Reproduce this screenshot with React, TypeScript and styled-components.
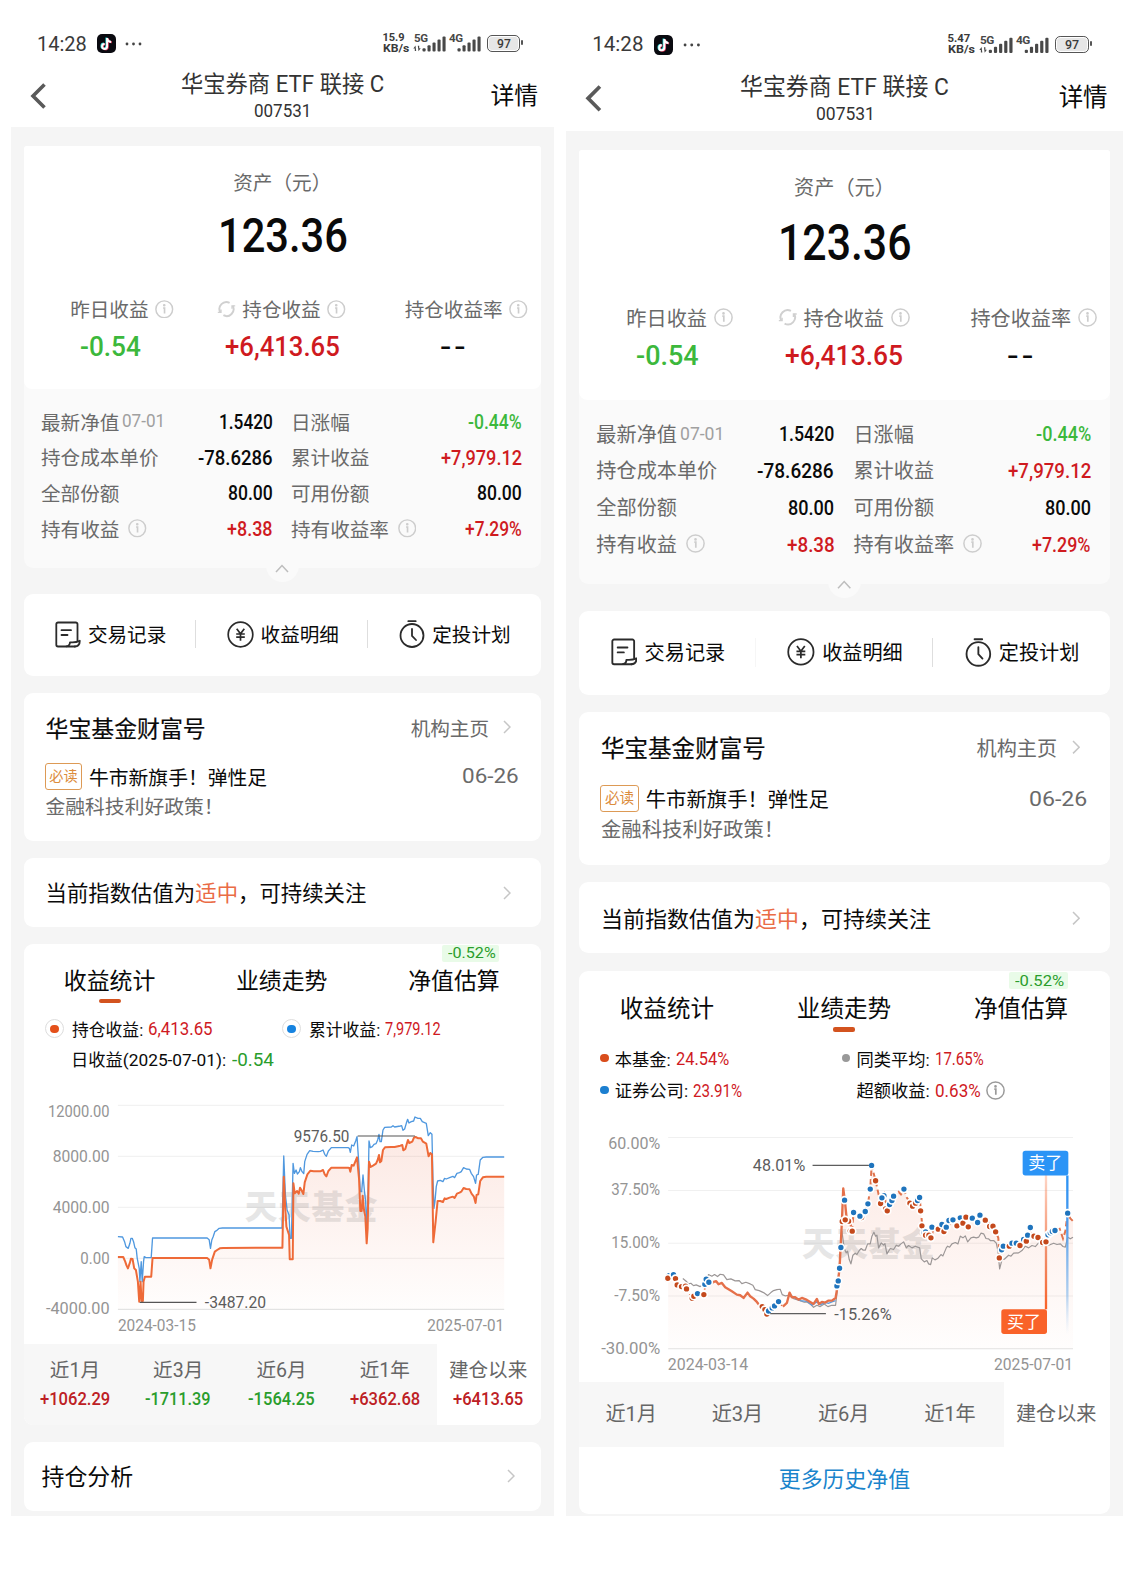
import React, { useLayoutEffect, useRef, useState } from 'react';
import styled, { createGlobalStyle } from 'styled-components';

const GlobalStyle = createGlobalStyle`
  * { box-sizing: border-box; }
  body {
    margin: 0;
    background: #fff;
    font-family: Roboto, 'Noto Sans CJK SC', sans-serif;
    color: #0a0a0a;
  }
`;

const RED = '#cf1a1f';
const GREEN = '#3cb83c';
const DEEP_GREEN = '#2a9d2c';

/* ---------- fitted text ---------- */

const FitBox = styled.span<{ $w: number; $size: number; $weight?: number; $color?: string; $gap?: number }>`
  display: block;
  flex: none;
  width: ${p => p.$w}px;
  font-size: ${p => p.$size}px;
  line-height: 1.2;
  font-weight: ${p => p.$weight ?? 400};
  letter-spacing: ${p => p.$gap ?? 0}px;
  color: ${p => p.$color ?? 'inherit'};
  white-space: nowrap;
`;

const FitInner = styled.span`
  display: inline-block;
  transform-origin: 0 50%;
`;

type FitProps = { w: number; size: number; weight?: number; color?: string; gap?: number; children: string };

function Fit({ w, size, weight, color, gap, children }: FitProps) {
  const ref = useRef<HTMLSpanElement>(null);
  const [k, setK] = useState(1);
  useLayoutEffect(() => {
    if (ref.current) setK(w / ref.current.offsetWidth);
  }, [w, size, weight, children]);
  return (
    <FitBox $w={w} $size={size} $weight={weight} $color={color} $gap={gap}>
      <FitInner ref={ref} style={{ transform: `scaleX(${k})` }}>{children}</FitInner>
    </FitBox>
  );
}

/* ---------- page frame ---------- */

const Page = styled.main`
  display: flex;
  align-items: flex-start;
  gap: 12px;
  width: 1134px;
  height: 1593px;
  padding-left: 11px;
  overflow: hidden;
  background: #fff;
`;

const Phone = styled.section<{ $zoom: number }>`
  flex: none;
  width: 542.5px;
  zoom: ${p => p.$zoom};
`;

const StatusBar = styled.div`
  display: flex;
  align-items: center;
  height: 56px;
  padding: 31px 33.5px 0 26px;
  color: #3a3a3a;
`;

const AppTile = styled.span`
  display: grid;
  place-items: center;
  width: 19px;
  height: 19px;
  margin: 0 9px 0 10px;
  border-radius: 5px;
  background: #0a0a10;
`;

const Speed = styled.div`
  display: grid;
  margin-left: auto;
  margin-right: 4px;
  > span { line-height: 10.6px; height: 10.6px; }
`;

const Battery = styled.div`
  position: relative;
  display: grid;
  place-items: center;
  width: 33px;
  height: 17px;
  margin-left: 6px;
  border: 1.7px solid #555;
  border-radius: 5px;
  background: #e6e6e6;
  box-shadow: inset 0 0 0 1px #fff;
  &::after {
    content: '';
    position: absolute;
    right: -4px;
    top: 4px;
    width: 2px;
    height: 5px;
    border-radius: 1px;
    background: #555;
  }
`;

const NavBar = styled.header`
  display: grid;
  grid-template-columns: 70px 1fr 70px;
  height: 71px;
`;

const NavBack = styled.div`
  padding: 27px 0 0 19px;
`;

const NavTitle = styled.div`
  display: flex;
  flex-direction: column;
  align-items: center;
  gap: 1.5px;
  padding-top: 15px;
  padding-right: 9px;
  margin: 0 -10px 0 0;
  color: #333;
`;

const NavAction = styled.div`
  padding-top: 22.5px;
  margin-left: 7px;
  font-size: 23.8px;
  line-height: 34px;
  white-space: nowrap;
`;

const Body = styled.div<{ $bottom: number }>`
  display: flex;
  flex-direction: column;
  gap: 17px;
  padding: 18.5px 13px ${p => p.$bottom}px;
  background: #f5f5f5;
`;

const Card = styled.div<{ $h?: number }>`
  height: ${p => (p.$h ? `${p.$h}px` : 'auto')};
  border-radius: 9px;
  background: #fff;
`;

/* ---------- asset card ---------- */

const AssetCard = styled.div`
  position: relative;
  height: 422px;
  margin-bottom: 9.5px;
  border-radius: 3px 3px 9px 9px;
  background: #fafafa;
`;

const AssetTop = styled.div`
  display: flex;
  flex-direction: column;
  align-items: center;
  height: 243.5px;
  padding-top: 23px;
  border-radius: 3px 3px 8px 8px;
  background: #fff;
`;

const AssetCaption = styled.div`
  font-size: 19.6px;
  line-height: 30px;
  color: #6a6a6a;
`;

const AssetTotal = styled.div`
  margin: 8.5px 0 0 1px;
`;

const Summary = styled.div`
  display: grid;
  grid-template-columns: repeat(3, 1fr);
  width: 100%;
  margin-top: 29px;
`;

const SummaryCell = styled.div`
  display: flex;
  flex-direction: column;
  align-items: center;
`;

const SummaryLabel = styled.div`
  display: flex;
  align-items: center;
  gap: 6.5px;
  margin: 0 -25px;
  padding-right: 1.5px;
  height: 28px;
  font-size: 19.6px;
  color: #6a6a6a;
  white-space: nowrap;
`;

const IconSlot = styled.span`
  display: grid;
  place-items: center;
  width: 18.5px;
  height: 18.5px;
`;

const SummaryValue = styled.div`
  margin-top: 7px;
  height: 32px;
`;

const Details = styled.div`
  display: grid;
  grid-template-columns: 231.5px 231px;
  column-gap: 18.5px;
  grid-auto-rows: 35.8px;
  padding: 15px 0 0 17px;
`;

const DetailCell = styled.div`
  display: flex;
  align-items: center;
  padding-bottom: 1.5px;
  font-size: 19.6px;
  color: #6a6a6a;
  white-space: nowrap;
`;

const DetailNote = styled.span`
  padding-top: 1px;
  margin-left: 3px;
`;

const DetailInfo = styled.span`
  display: flex;
  margin-left: 9px;
`;

const DetailValue = styled.div`
  padding-top: 2.5px;
  margin-left: auto;
`;

const Collapse = styled.div`
  position: absolute;
  left: 50%;
  bottom: -14px;
  display: grid;
  place-items: center;
  width: 33px;
  height: 33px;
  margin-left: -16.5px;
  padding-top: 7px;
  border-radius: 50%;
  background: #fafafa;
`;

/* ---------- action strip ---------- */

const Actions = styled(Card)`
  display: grid;
  grid-template-columns: repeat(3, 1fr);
  align-items: center;
`;

const Action = styled.div<{ $line?: string }>`
  display: flex;
  align-items: center;
  justify-content: center;
  gap: 7px;
  height: 28px;
  margin-top: -1px;
  font-size: 19.6px;
  padding-left: 2px;
  border-right: 1px solid ${p => p.$line ?? 'transparent'};
`;

const ActionText = styled.span`
  padding-bottom: 1.5px;
`;

/* ---------- wealth + valuation cards ---------- */

const Wealth = styled(Card)`
  padding: 17.5px 22px 0 21.5px;
`;

const Line = styled.div<{ $h: number; $mt?: number }>`
  display: flex;
  align-items: center;
  height: ${p => p.$h}px;
  margin-top: ${p => p.$mt ?? 0}px;
  white-space: nowrap;
`;

const Heading = styled.div`
  padding-bottom: 1px;
  font-size: 22.9px;
  -webkit-text-stroke: 0.2px currentColor;
`;

const MoreLink = styled.div`
  display: flex;
  align-items: center;
  gap: 14px;
  margin-left: auto;
  margin-right: 7.5px;
  font-size: 19.6px;
  color: #6a6a6a;
`;

const MustRead = styled.span`
  display: grid;
  place-items: center;
  width: 37px;
  height: 27px;
  margin-left: -0.5px;
  margin-right: 7px;
  border: 1.2px solid #dd9a55;
  border-radius: 3px;
  font-size: 14.2px;
  line-height: 1;
  color: #dc8c3c;
`;

const Headline = styled.div`
  flex: 1;
  padding-bottom: 1px;
  font-size: 19.8px;
`;

const SubLine = styled.div`
  margin-top: 2px;
  font-size: 19.8px;
  line-height: 30px;
  color: #6a6a6a;
`;

const LinkCard = styled(Card)<{ $size: number; $left: number; $right: number }>`
  display: flex;
  align-items: center;
  justify-content: space-between;
  padding: 0 ${p => p.$right}px 0 ${p => p.$left}px;
  font-size: ${p => p.$size}px;
  > span { padding-bottom: 2px; }
  em { font-style: normal; color: #ea6c46; }
`;

/* ---------- statistics card ---------- */

const StatCard = styled(Card)`
  overflow: hidden;
`;

const Tabs = styled.div`
  display: grid;
  grid-template-columns: repeat(3, 1fr);
  height: 69.5px;
`;

const Tab = styled.div<{ $active?: boolean }>`
  position: relative;
  padding: 21px 1px 0 0;
  text-align: center;
  font-size: 22.9px;
  line-height: 34px;
  &::after {
    content: '';
    position: absolute;
    left: 50%;
    top: 54.5px;
    width: 22px;
    height: 4.5px;
    margin-left: -11.5px;
    border-radius: 2px;
    background: ${p => (p.$active ? '#d3531f' : 'transparent')};
  }
`;

const TabBadge = styled.span`
  position: absolute;
  left: 74px;
  top: 1px;
  display: flex;
  align-items: center;
  height: 17px;
  padding: 1.5px 5px 0 4px;
  border-radius: 2px;
  background: #e9fbe8;
`;

const Legend = styled.div<{ $left: number; $second: number }>`
  display: grid;
  grid-template-columns: ${p => p.$second}px 1fr;
  grid-auto-rows: 30.8px;
  height: 61px;
  padding-left: ${p => p.$left}px;
`;

const LegendItem = styled.div<{ $indent?: number }>`
  display: flex;
  align-items: center;
  padding-left: ${p => p.$indent ?? 0}px;
  font-size: 16.8px;
  white-space: nowrap;
  > span + span { margin-left: 5px; padding-top: 1px; }
`;

const Ring = styled.i<{ $c: string }>`
  display: grid;
  place-items: center;
  width: 19px;
  height: 19px;
  margin-right: 8px;
  border: 1.3px solid #ddd;
  border-radius: 50%;
  &::after {
    content: '';
    width: 8.6px;
    height: 8.6px;
    border-radius: 50%;
    background: ${p => p.$c};
  }
`;

const Dot = styled.i<{ $c: string }>`
  width: 8px;
  height: 8px;
  margin-right: 6px;
  border-radius: 50%;
  background: ${p => p.$c};
`;

const ChartSvg = styled.svg`
  display: block;
  width: 516.5px;
  height: 269px;
  font-family: Roboto, 'Noto Sans CJK SC', sans-serif;
`;

const Ranges = styled.div<{ $h: number }>`
  display: grid;
  grid-template-columns: repeat(5, 1fr);
  height: ${p => p.$h}px;
`;

const RangeCell = styled.div<{ $active?: boolean; $pt: number }>`
  display: flex;
  flex-direction: column;
  align-items: center;
  gap: 4px;
  padding: ${p => p.$pt}px 1.5px 0 0;
  background: ${p => (p.$active ? '#fff' : '#f7f7f7')};
  font-size: 19.6px;
  line-height: 28px;
  color: #666;
  white-space: nowrap;
`;

const History = styled.div`
  height: 65.5px;
  padding-top: 17.5px;
  text-align: center;
  font-size: 21.3px;
  line-height: 30px;
  color: #1a84cc;
`;

/* ---------- icons ---------- */

const Info = ({ color = '#cdcdcd' }: { color?: string }) => (
  <svg width="18.5" height="18.5" viewBox="0 0 19 19" fill="none" stroke={color} strokeWidth="1.5">
    <circle cx="9.5" cy="9.5" r="8.6" />
    <path d="M8.3 8.2h1.5v5.6" strokeWidth="1.7" />
    <circle cx="9.5" cy="5.4" r="0.6" fill={color} />
  </svg>
);

const Refresh = () => (
  <svg width="19" height="18" viewBox="0 0 19 18" fill="none" stroke="#d0d0d0" strokeWidth="1.9">
    <path d="M3.3 12.3A6.9 6.9 0 0 1 12.6 2.9" />
    <path d="M15.7 5.8A6.900 6.900 0 0 1 6.400 15.200" />
    <path d="M0.800 12.300h3.200V9.400M18.200 5.800h-3.200v2.900" strokeWidth="1.300" />
  </svg>
);

const Chevron = () => (
  <svg width="8" height="14" viewBox="0 0 8 14" fill="none" stroke="#c6c6c6" strokeWidth="1.5">
    <path d="M1 1l6 6-6 6" />
  </svg>
);

const DocIcon = () => (
  <svg width="26" height="27" viewBox="0 0 26 27" fill="none" stroke="#2b2b2b" strokeWidth="1.8" strokeLinejoin="round" strokeLinecap="round">
    <path d="M22.5 19.500V3.2a1.7 1.7 0 0 0-1.7-1.7H3A1.7 1.7 0 0 0 1.3 3.2v20.6a1.7 1.7 0 0 0 1.7 1.7h17" />
    <path d="M11.500 25.400c2.400-.2 3.400-1.700 3.500-4.100h2.500c2.800 0 5-.5 7.300-1.500 0 3.400-1.300 5.600-5 5.700" />
    <path d="M6.5 9.2h9.5M6.5 14h6" />
  </svg>
);

const YenIcon = () => (
  <svg width="27" height="27" viewBox="0 0 27 27" fill="none" stroke="#2b2b2b" strokeWidth="1.7">
    <circle cx="13.5" cy="13.5" r="12.3" />
    <path d="M9.7 7.8l3.8 5 3.8-5M13.5 12.8v7M9.2 13h8.6M9.2 16.2h8.6" />
  </svg>
);

const ClockIcon = () => (
  <svg width="26" height="28" viewBox="0 0 26 28" fill="none" stroke="#2b2b2b" strokeWidth="1.8" strokeLinecap="round">
    <circle cx="13" cy="15.5" r="11.5" />
    <path d="M9.3 1.2h7.4M13 9v6.8l4 4.2" />
  </svg>
);

const Note = () => (
  <svg width="15" height="15" viewBox="0 0 15 15" fill="none" strokeWidth="2">
    <path d="M7.4 1.5v8.6a2.5 2.5 0 1 1-2.5-2.6M7.4 2c.4 2.200 1.900 3.400 4 3.500" stroke="#25d6d6" />
    <path d="M8.800 2.300v8.600a2.500 2.500 0 1 1-2.500-2.600M8.800 2.800c.4 2.200 1.900 3.400 4 3.500" stroke="#e0365a" />
    <path d="M8.100 1.900v8.600a2.500 2.500 0 1 1-2.500-2.600M8.100 2.400c.4 2.200 1.900 3.400 4 3.500" stroke="#fff" />
  </svg>
);

const Dots = () => (
  <svg width="17" height="4" viewBox="0 0 17 4" fill="#444">
    <circle cx="2" cy="2" r="1.4" /><circle cx="8.500" cy="2" r="1.4" /><circle cx="15" cy="2" r="1.4" />
  </svg>
);

const SignalSvg = styled.svg`
  flex: none;
  margin-top: -4px;
`;

const Signals = () => (
  <SignalSvg width="68" height="23" viewBox="0 -4 68 23" fill="#484848" fontFamily="Roboto, sans-serif" fontWeight="700" fontSize="11.500">
    <text x="1" y="8.400" textLength="14">5G</text>
    <path d="M2.500 11.500 0.300 14.500h1.500v2.500h1.400zM5.500 17.200l2.200-3h-1.500v-2.500H4.800z" />
    {[0, 1, 2, 3, 4].map(i => (
      <rect key={i} x={9.500 + i * 5} y={14.200 - i * 2.900} width="3.100" height={3.300 + i * 2.900} rx="1" />
    ))}
    <text x="36" y="8.400" textLength="14">4G</text>
    {[0, 1, 2, 3, 4].map(i => (
      <rect key={i} x={44.500 + i * 5} y={14.200 - i * 2.900} width="3.100" height={3.300 + i * 2.900} rx="1" />
    ))}
  </SignalSvg>
);

/* ---------- charts ---------- */

type AxisLabel = { t: string; x: number; y: number; w: number; end?: boolean; dark?: boolean };

const ChartLabel = ({ t, x, y, w, end, dark }: AxisLabel) => (
  <text
    x={x} y={y + 17} fontSize={dark ? 50 : 47} fill={dark ? '#5c5c5c' : '#949494'}
    textAnchor={end ? 'end' : 'start'} textLength={w} lengthAdjust="spacingAndGlyphs"
  >{t}</text>
);

const Watermark = ({ x, y }: { x: number; y: number }) => (
  <text x={x} y={y} fontSize="98" fontWeight="900" fill="#777" opacity="0.18" textLength="398">天天基金</text>
);

const PROFIT_TOTAL =
  '24,425 38,426 44,440 48,455 55,460 60,445 63,430 67,430 71,440 75,458 79,462 82,490 88,520 90,560 94,500 97,560 101,500 103,485 108,488 124,488 128,429 292,429 298,434 302,460 306,435 310,425 315,410 320,407 328,400 338,399 517,399 522,183 527,300 532,345 538,360 541,430 545,430 550,205 554,235 559,225 563,237 569,230 572,218 577,230 582,236 585,200 592,178 600,167 610,169 625,170 632,169 640,165 645,178 650,184 656,168 665,158 715,158 719,160 722,172 726,150 732,153 738,138 742,125 747,200 752,290 756,290 760,240 764,285 768,320 771,400 775,300 778,138 782,158 788,155 793,148 799,146 804,135 808,118 811,140 815,140 820,105 825,97 845,96 850,92 855,96 872,93 876,92 880,106 885,102 890,85 894,73 898,84 905,80 912,78 916,66 925,70 932,70 938,80 950,85 956,122 962,113 967,118 970,250 973,340 976,320 980,275 984,258 992,256 1000,260 1005,250 1010,252 1020,248 1030,244 1035,248 1042,235 1050,233 1055,230 1062,218 1070,222 1080,223 1085,235 1092,245 1098,265 1101,240 1106,238 1112,195 1120,187 1130,186 1184,186';

const PROFIT_HOLDING =
  '24,486 40,486 46,500 50,512 54,520 60,503 63,491 68,492 73,520 78,525 84,560 88,620 92,560 95,618 99,618 101,560 105,545 124,545 128,489 292,489 298,494 302,520 307,494 315,470 322,465 330,460 340,459 518,458 522,245 526,330 530,395 538,420 540,493 549,493 551,265 555,295 562,288 567,296 571,278 575,285 581,297 585,262 593,238 602,227 612,229 632,229 640,225 645,238 650,244 656,228 665,218 715,218 719,219 722,230 726,210 732,212 738,197 742,187 748,250 752,348 756,348 759,302 763,345 767,365 771,445 774,400 778,200 783,216 790,212 799,206 804,195 808,180 811,202 815,198 820,165 826,157 845,156 855,156 872,152 878,150 881,166 887,162 892,145 895,135 899,144 908,140 913,128 918,126 926,130 934,130 940,140 950,146 957,184 962,174 967,178 971,442 978,380 984,318 992,318 1000,321 1005,310 1010,312 1020,308 1030,305 1035,309 1042,296 1050,293 1055,290 1062,279 1070,282 1080,283 1086,296 1093,305 1098,324 1101,300 1106,298 1112,258 1120,247 1130,245 1184,245';

function ProfitChart() {
  return (
    <ChartSvg viewBox="-258 -60 1551 807" preserveAspectRatio="none">
      <defs>
        <linearGradient id="profitFill" x1="0" y1="120" x2="0" y2="643" gradientUnits="userSpaceOnUse">
          <stop offset="0" stopColor="#e8552a" stopOpacity="0.13" />
          <stop offset="1" stopColor="#e8552a" stopOpacity="0.01" />
        </linearGradient>
      </defs>
      {[31, 184, 337, 490, 643].map(y => (
        <path key={y} d={`M24 ${y}H1184`} stroke={y === 643 ? '#ddd' : '#efefef'} strokeWidth="3" />
      ))}
      <polygon points={`24,643 ${PROFIT_HOLDING} 1184,643`} fill="url(#profitFill)" />
      <Watermark x={405} y={373} />
      <polyline points={PROFIT_TOTAL} fill="none" stroke="#4f98df" strokeWidth="4" strokeLinejoin="round" />
      <polyline points={PROFIT_HOLDING} fill="none" stroke="#ee6a38" strokeWidth="6" strokeLinejoin="round" />
      <path d="M744 123H916M90 622H260" stroke="#555" strokeWidth="3.500" />
      <ChartLabel t="9576.50" x={552} y={125} w={167} dark />
      <ChartLabel t="-3487.20" x={285} y={623} w={184} dark />
      <ChartLabel t="12000.00" x={-1} y={49} w={185} end />
      <ChartLabel t="8000.00" x={-1} y={183} w={171} end />
      <ChartLabel t="4000.00" x={-1} y={336} w={171} end />
      <ChartLabel t="0.00" x={-1} y={489} w={88} end />
      <ChartLabel t="-4000.00" x={-1} y={641} w={191} end />
      <ChartLabel t="2024-03-15" x={24} y={691} w={234} />
      <ChartLabel t="2025-07-01" x={1184} y={691} w={231} end />
    </ChartSvg>
  );
}

const FUND_HEAD = '24,440 45,440 55,462 80,480 97,500 112,487 131,488 138,445 150,458';
const FUND_MID =
  '150,458 160,452 168,450 175,459 185,455 195,468 205,474 215,480 230,490 240,492 250,500 262,484 270,495 280,502 290,512 300,525';
const FUND_DIP = '300,525 320,548 335,532 355,512 368,526';
const FUND_RISE =
  '368,526 380,515 388,484 395,498 405,498 415,505 425,500 440,506 450,512 460,518 470,503 476,518 485,512 495,514 505,508 515,508 526,500 531,470 538,410 545,270 549,172 554,210 560,270 570,275 575,300';
const FUND_TAIL =
  '575,300 580,245 599,256 616,240 623,218 630,174 634,104 646,148 655,190 663,215 672,190 681,238 690,220 700,195 715,182 722,190 731,176 740,200 757,225 768,215 778,198 782,240 786,285 800,310 812,320 820,292 835,292 850,300 860,290 878,266 890,284 902,258 916,258 924,286 937,262 952,272 960,252 975,265 998,285 1006,302 1014,320 1018,380 1025,355 1040,340 1055,336 1080,342 1098,330 1110,290 1120,315 1135,318 1157,332 1170,305 1184,298 1198,293 1208,322 1215,300 1222,246 1230,262 1238,270';
const PEER_AVG =
  '68,442 78,450 85,458 92,456 100,463 108,461 120,466 135,455 145,430 155,435 163,430 172,436 180,429 190,431 200,445 212,443 225,449 237,448 245,457 257,453 270,458 278,462 285,475 297,478 310,484 322,493 332,484 340,478 350,475 360,474 366,490 376,494 385,492 400,502 420,508 432,513 440,512 452,520 460,528 470,522 480,526 492,518 503,526 515,522 526,522 531,480 545,300 552,352 558,365 562,360 567,385 572,398 578,372 585,366 590,370 597,358 603,352 609,357 615,357 622,338 630,338 635,315 641,303 646,315 650,312 655,350 663,335 670,342 674,337 680,368 690,352 700,355 708,342 715,345 722,338 730,332 738,350 745,343 755,350 765,345 778,350 783,383 792,392 800,388 805,398 811,400 816,380 824,386 832,382 842,370 848,374 858,350 862,345 868,348 875,338 885,334 893,338 900,315 908,320 915,314 922,332 932,320 940,318 948,320 955,318 962,306 970,308 977,322 985,323 990,328 1000,328 1008,336 1013,360 1018,413 1025,385 1032,384 1045,372 1052,375 1060,366 1075,365 1085,358 1095,345 1105,350 1115,343 1125,346 1135,335 1145,345 1155,340 1165,342 1180,336 1190,340 1200,338 1208,346 1215,348 1222,318 1230,323 1238,318';
const INDEX_LINE = '388,490 405,501 420,508 440,510 455,522 470,512 480,520 495,514 505,516 515,512 526,508';

type Mark = [number, number, 'b' | 'o'];
const MARKS: Mark[] = [
  [27, 433, 'b'], [23, 441, 'o'], [40, 430, 'b'], [46, 442, 'o'], [51, 461, 'o'], [64, 466, 'o'], [76, 465, 'o'], [79, 473, 'o'],
  [96, 501, 'o'], [101, 495, 'o'], [112, 487, 'b'], [131, 490, 'o'], [134, 459, 'b'], [138, 444, 'b'], [146, 453, 'b'],
  [306, 526, 'o'], [314, 535, 'o'], [320, 548, 'o'], [325, 539, 'b'], [336, 530, 'b'], [343, 524, 'b'], [355, 511, 'b'],
  [530, 464, 'b'], [534, 449, 'b'], [538, 411, 'b'], [542, 349, 'b'], [546, 271, 'o'], [553, 207, 'b'], [565, 270, 'o'], [555, 266, 'o'],
  [570, 299, 'o'], [576, 300, 'o'], [580, 244, 'b'], [604, 259, 'o'], [599, 255, 'b'], [615, 241, 'b'], [623, 218, 'b'],
  [630, 174, 'b'], [634, 103, 'b'], [646, 149, 'o'], [661, 217, 'o'], [671, 194, 'b'], [665, 200, 'b'], [676, 233, 'o'], [681, 239, 'o'],
  [688, 220, 'b'], [695, 208, 'b'], [700, 195, 'b'], [731, 174, 'b'], [749, 216, 'o'], [757, 225, 'o'], [766, 216, 'o'], [772, 208, 'b'],
  [778, 199, 'b'], [781, 239, 'o'], [785, 284, 'o'], [791, 304, 'b'], [796, 302, 'b'], [796, 312, 'o'], [806, 312, 'o'], [812, 320, 'o'],
  [815, 288, 'b'], [834, 294, 'o'], [845, 280, 'b'], [851, 301, 'o'], [858, 288, 'b'], [866, 268, 'b'], [878, 266, 'b'], [890, 284, 'o'],
  [900, 260, 'b'], [908, 276, 'o'], [917, 258, 'o'], [924, 287, 'o'], [936, 261, 'b'], [952, 274, 'b'], [959, 252, 'b'], [975, 267, 'o'],
  [988, 286, 'o'], [998, 285, 'o'], [1006, 302, 'o'], [1017, 380, 'o'], [1024, 356, 'b'], [1029, 345, 'b'], [1047, 345, 'o'], [1055, 336, 'b'],
  [1068, 336, 'b'], [1079, 343, 'o'], [1090, 325, 'b'], [1098, 330, 'o'], [1102, 312, 'b'], [1110, 289, 'b'], [1121, 315, 'o'], [1133, 319, 'o'],
  [1147, 334, 'o'], [1157, 332, 'o'], [1163, 311, 'b'], [1170, 305, 'b'], [1176, 301, 'b'], [1184, 298, 'b'], [1222, 246, 'b'],
];

function TrendChart() {
  return (
    <ChartSvg viewBox="-243.400 -78 1593 828.800" preserveAspectRatio="none">
      <defs>
        <linearGradient id="trendFill" x1="0" y1="100" x2="0" y2="652" gradientUnits="userSpaceOnUse">
          <stop offset="0" stopColor="#e8552a" stopOpacity="0.12" />
          <stop offset="1" stopColor="#e8552a" stopOpacity="0.01" />
        </linearGradient>
        <linearGradient id="sellStem" x1="0" y1="133" x2="0" y2="610" gradientUnits="userSpaceOnUse">
          <stop offset="0" stopColor="#2a92f5" />
          <stop offset="0.3" stopColor="#4d9bec" />
          <stop offset="0.75" stopColor="#7db4ea" stopOpacity="0.6" />
          <stop offset="1" stopColor="#b5d3f2" stopOpacity="0" />
        </linearGradient>
        <linearGradient id="buyStem" x1="0" y1="130" x2="0" y2="534" gradientUnits="userSpaceOnUse">
          <stop offset="0" stopColor="#f96127" stopOpacity="0.25" />
          <stop offset="0.6" stopColor="#ee7a50" stopOpacity="0.85" />
          <stop offset="1" stopColor="#f96127" />
        </linearGradient>
      </defs>
      {[19, 178, 336, 494, 652].map(y => (
        <path key={y} d={`M24 ${y}H1238`} stroke={y === 652 ? '#e2e2e2' : '#f0f0f0'} strokeWidth="3" />
      ))}
      <polygon points={`24,652 ${FUND_HEAD} ${FUND_MID} ${FUND_DIP} ${FUND_RISE} ${FUND_TAIL} 1238,652`} fill="url(#trendFill)" />
      <Watermark x={425} y={374} />
      <polyline points={PEER_AVG} fill="none" stroke="#9b9696" strokeWidth="3.600" strokeLinejoin="round" />
      <polyline points={INDEX_LINE} fill="none" stroke="#5b9bdc" strokeWidth="4" />
      <polyline points={FUND_HEAD} fill="none" stroke="#e0693f" strokeWidth="5" strokeDasharray="8 14" />
      <polyline points={FUND_DIP} fill="none" stroke="#e0693f" strokeWidth="5" strokeDasharray="8 14" />
      <polyline points={FUND_TAIL} fill="none" stroke="#e0744e" strokeWidth="6" strokeDasharray="16 10" />
      <polyline points={FUND_MID} fill="none" stroke="#e5704a" strokeWidth="7" strokeLinejoin="round" />
      <polyline points={FUND_RISE} fill="none" stroke="#e5704a" strokeWidth="7" strokeLinejoin="round" />
      <path d="M1157 534V130" stroke="url(#buyStem)" strokeWidth="7" />
      <path d="M1221 133V610" stroke="url(#sellStem)" strokeWidth="7" />
      {MARKS.map(([x, y, k], i) => (
        <circle key={i} cx={x} cy={y} r="10.500" fill={k === 'b' ? '#1f74bd' : '#c4491c'} stroke="#fff" strokeWidth="5" />
      ))}
      <path d="M457 103H626M330 547H497" stroke="#5e5e5e" strokeWidth="3.500" />
      <rect x="1087" y="59" width="137" height="74" rx="8" fill="#2b94f6" />
      <rect x="1023" y="534" width="137" height="74" rx="8" fill="#f96229" />
      <text x="1104" y="114" fontSize="51" fill="#fff">卖了</text>
      <text x="1040" y="589" fontSize="51" fill="#fff">买了</text>
      <ChartLabel t="48.01%" x={278} y={104} w={157} dark />
      <ChartLabel t="-15.26%" x={522} y={549} w={172} dark />
      <ChartLabel t="60.00%" x={0} y={36} w={156} end />
      <ChartLabel t="37.50%" x={0} y={176} w={147} end />
      <ChartLabel t="15.00%" x={0} y={334} w={147} end />
      <ChartLabel t="-7.50%" x={0} y={492} w={138} end />
      <ChartLabel t="-30.00%" x={0} y={650} w={177} end />
      <ChartLabel t="2024-03-14" x={23} y={700} w={241} />
      <ChartLabel t="2025-07-01" x={1238} y={700} w={237} end />
    </ChartSvg>
  );
}

/* ---------- shared sections ---------- */

function Header({ speed }: { speed: string }) {
  return (
    <>
      <StatusBar>
        <Fit w={50} size={20} weight={400}>14:28</Fit>
        <AppTile><Note /></AppTile>
        <Dots />
        <Speed>
          <Fit w={22} size={11} weight={700}>{speed}</Fit>
          <Fit w={26.5} size={11} weight={700}>KB/s</Fit>
        </Speed>
        <Signals />
        <Battery><Fit w={14} size={13} weight={500}>97</Fit></Battery>
      </StatusBar>
      <NavBar>
        <NavBack>
          <svg width="17" height="26" viewBox="0 0 17 26" fill="none" stroke="#5a5a5a" strokeWidth="3.600">
            <path d="M14.500 1.500 3 13l11.500 11.500" />
          </svg>
        </NavBack>
        <NavTitle>
          <Fit w={203.500} size={23}>华宝券商 ETF 联接 C</Fit>
          <Fit w={57} size={18.200}>007531</Fit>
        </NavTitle>
        <NavAction>详情</NavAction>
      </NavBar>
    </>
  );
}

const SUMMARY = [
  { label: '昨日收益', value: '-0.54', w: 61, color: GREEN },
  { label: '持仓收益', value: '+6,413.65', w: 115, color: RED, refresh: true },
  { label: '持仓收益率', value: '--', w: 29, color: '#0a0a0a', gap: 2.500 },
];

const DETAILS = [
  { label: '最新净值', note: '07-01', value: '1.5420', w: 54 },
  { label: '日涨幅', value: '-0.44%', w: 54, color: GREEN },
  { label: '持仓成本单价', value: '-78.6286', w: 75 },
  { label: '累计收益', value: '+7,979.12', w: 81, color: RED },
  { label: '全部份额', value: '80.00', w: 45 },
  { label: '可用份额', value: '80.00', w: 45 },
  { label: '持有收益', info: true, value: '+8.38', w: 46, color: RED },
  { label: '持有收益率', info: true, value: '+7.29%', w: 57, color: RED },
];

function Overview({ firstLine }: { firstLine: string }) {
  return (
    <>
      <AssetCard>
        <AssetTop>
          <AssetCaption>资产（元）</AssetCaption>
          <AssetTotal><Fit w={130} size={49} weight={500}>123.36</Fit></AssetTotal>
          <Summary>
            {SUMMARY.map(s => (
              <SummaryCell key={s.label}>
                <SummaryLabel>
                  <IconSlot>{s.refresh && <Refresh />}</IconSlot>
                  {s.label}
                  <IconSlot><Info /></IconSlot>
                </SummaryLabel>
                <SummaryValue><Fit w={s.w} size={27.500} weight={500} color={s.color} gap={s.gap}>{s.value}</Fit></SummaryValue>
              </SummaryCell>
            ))}
          </Summary>
        </AssetTop>
        <Details>
          {DETAILS.map(d => (
            <DetailCell key={d.label}>
              {d.label}
              {d.note && <DetailNote><Fit w={43} size={17.500} color="#a0a0a0">{d.note}</Fit></DetailNote>}
              {d.info && <DetailInfo><Info /></DetailInfo>}
              <DetailValue><Fit w={d.w} size={19.500} weight={500} color={d.color ?? '#0a0a0a'}>{d.value}</Fit></DetailValue>
            </DetailCell>
          ))}
        </Details>
        <Collapse>
          <svg width="14" height="9" viewBox="0 0 14 9" fill="none" stroke="#bdbdbd" strokeWidth="1.500">
            <path d="M1 8l6-6.500L13 8" />
          </svg>
        </Collapse>
      </AssetCard>

      <Actions $h={81.500}>
        <Action $line={firstLine}><DocIcon /><ActionText>交易记录</ActionText></Action>
        <Action $line="#dedede"><YenIcon /><ActionText>收益明细</ActionText></Action>
        <Action><ClockIcon /><ActionText>定投计划</ActionText></Action>
      </Actions>

      <Wealth $h={148.500}>
        <Line $h={34}>
          <Heading>华宝基金财富号</Heading>
          <MoreLink>机构主页<Chevron /></MoreLink>
        </Line>
        <Line $h={28} $mt={18.500}>
          <MustRead>必读</MustRead>
          <Headline>牛市新旗手！弹性足</Headline>
          <Fit w={57} size={20.500} color="#6a6a6a">06-26</Fit>
        </Line>
        <SubLine>金融科技利好政策！</SubLine>
      </Wealth>

      <LinkCard $h={69} $size={21.400} $left={21.500} $right={29.500}>
        <span>当前指数估值为<em>适中</em>，可持续关注</span>
        <Chevron />
      </LinkCard>
    </>
  );
}

function StatTabs({ active }: { active: number }) {
  return (
    <Tabs>
      {['收益统计', '业绩走势', '净值估算'].map((t, i) => (
        <Tab key={t} $active={i === active}>
          {t}
          {i === 2 && <TabBadge><Fit w={48} size={14.800} color={DEEP_GREEN}>-0.52%</Fit></TabBadge>}
        </Tab>
      ))}
    </Tabs>
  );
}

const RANGES = [
  { label: '近1月', value: '+1062.29', w: 70, color: '#bd2024' },
  { label: '近3月', value: '-1711.39', w: 66, color: DEEP_GREEN },
  { label: '近6月', value: '-1564.25', w: 67, color: DEEP_GREEN },
  { label: '近1年', value: '+6362.68', w: 70, color: '#bd2024' },
  { label: '建仓以来', value: '+6413.65', w: 70, color: '#bd2024' },
];

function RangeBar({ values }: { values?: boolean }) {
  return (
    <Ranges $h={values ? 81 : 63.500}>
      {RANGES.map((r, i) => (
        <RangeCell key={r.label} $active={i === 4} $pt={values ? 13.500 : 18}>
          {r.label}
          {values && <Fit w={r.w} size={17.500} weight={500} color={r.color}>{r.value}</Fit>}
        </RangeCell>
      ))}
    </Ranges>
  );
}

export default function App() {
  return (
    <>
      <GlobalStyle />
      <Page>
        <Phone $zoom={1}>
          <Header speed="15.9" />
          <Body $bottom={5}>
            <Overview firstLine="#dedede" />
            <StatCard>
              <StatTabs active={0} />
              <Legend $left={21} $second={237}>
                <LegendItem>
                  <Ring $c="#e4501a" />
                  <span>持仓收益:</span><Fit w={64.500} size={17.500} color={RED}>6,413.65</Fit>
                </LegendItem>
                <LegendItem>
                  <Ring $c="#1683e0" />
                  <span>累计收益:</span><Fit w={55.500} size={17.500} color={RED}>7,979.12</Fit>
                </LegendItem>
                <LegendItem $indent={26}>
                  <Fit w={155.500} size={17}>日收益(2025-07-01):</Fit>
                  <Fit w={42} size={17.500} color={DEEP_GREEN}>-0.54</Fit>
                </LegendItem>
              </Legend>
              <ProfitChart />
              <RangeBar values />
            </StatCard>
            <LinkCard $h={69} $size={22.900} $left={17.500} $right={26}>
              <span>持仓分析</span>
              <Chevron />
            </LinkCard>
          </Body>
        </Phone>

        <Phone $zoom={1.0285}>
          <Header speed="5.47" />
          <Body $bottom={1.500}>
            <Overview firstLine="#f6f6f6" />
            <StatCard>
              <StatTabs active={1} />
              <Legend $left={21} $second={235}>
                <LegendItem>
                  <Dot $c="#d94d1c" />
                  <span>本基金:</span><Fit w={52} size={17.500} color={RED}>24.54%</Fit>
                </LegendItem>
                <LegendItem>
                  <Dot $c="#999" />
                  <span>同类平均:</span><Fit w={47.500} size={17.500} color={RED}>17.65%</Fit>
                </LegendItem>
                <LegendItem>
                  <Dot $c="#1c7fd0" />
                  <span>证券公司:</span><Fit w={48} size={17.500} color={RED}>23.91%</Fit>
                </LegendItem>
                <LegendItem $indent={14}>
                  <span>超额收益:</span><Fit w={44.500} size={17.500} color={RED}>0.63%</Fit>
                  <DetailInfo><Info color="#9a9a9a" /></DetailInfo>
                </LegendItem>
              </Legend>
              <TrendChart />
              <RangeBar />
              <History>更多历史净值</History>
            </StatCard>
          </Body>
        </Phone>
      </Page>
    </>
  );
}
